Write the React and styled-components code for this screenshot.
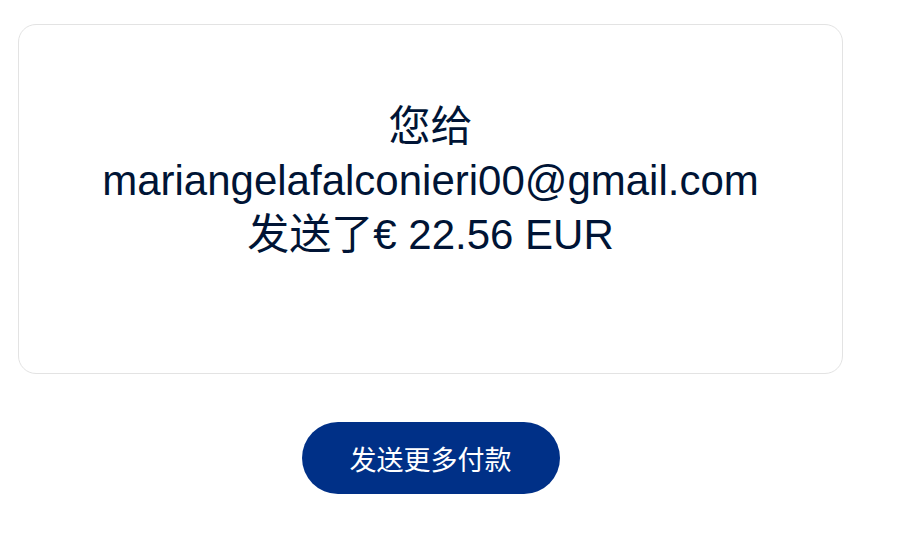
import styled, { createGlobalStyle } from 'styled-components';

const GlobalStyle = createGlobalStyle`
  html, body {
    margin: 0;
    padding: 0;
    background: #ffffff;
  }
  body {
    font-family: "Liberation Sans", Arial, "Noto Sans CJK SC", sans-serif;
  }
`;

export default function App() {
  return (
    <>
      <GlobalStyle />
      <Page>
        <ConfirmCard>
          <Message>
            您给
            <br />
            mariangelafalconieri00@gmail.com
            <br />
            发送了€ 22.56 EUR
          </Message>
        </ConfirmCard>
        <PrimaryButton type="button">发送更多付款</PrimaryButton>
      </Page>
    </>
  );
}

const Page = styled.main`
  display: flex;
  flex-direction: column;
  align-items: center;
  gap: 48px;
  width: 825px;
  padding: 24px 0 0 18px;
`;

const ConfirmCard = styled.section`
  box-sizing: border-box;
  width: 100%;
  height: 350px;
  padding-top: 75px;
  border: 1px solid #e3e3e3;
  border-radius: 18px;
  background: #ffffff;
  text-align: center;
`;

const Message = styled.p`
  margin: 0;
  color: #001435;
  font-size: 42px;
  line-height: 54px;
`;

const PrimaryButton = styled.button`
  width: 258px;
  height: 72px;
  border: none;
  border-radius: 36px;
  background: #003087;
  color: #ffffff;
  font-family: "Liberation Sans", Arial, "Noto Sans CJK SC", sans-serif;
  font-size: 27px;
  cursor: pointer;
`;
